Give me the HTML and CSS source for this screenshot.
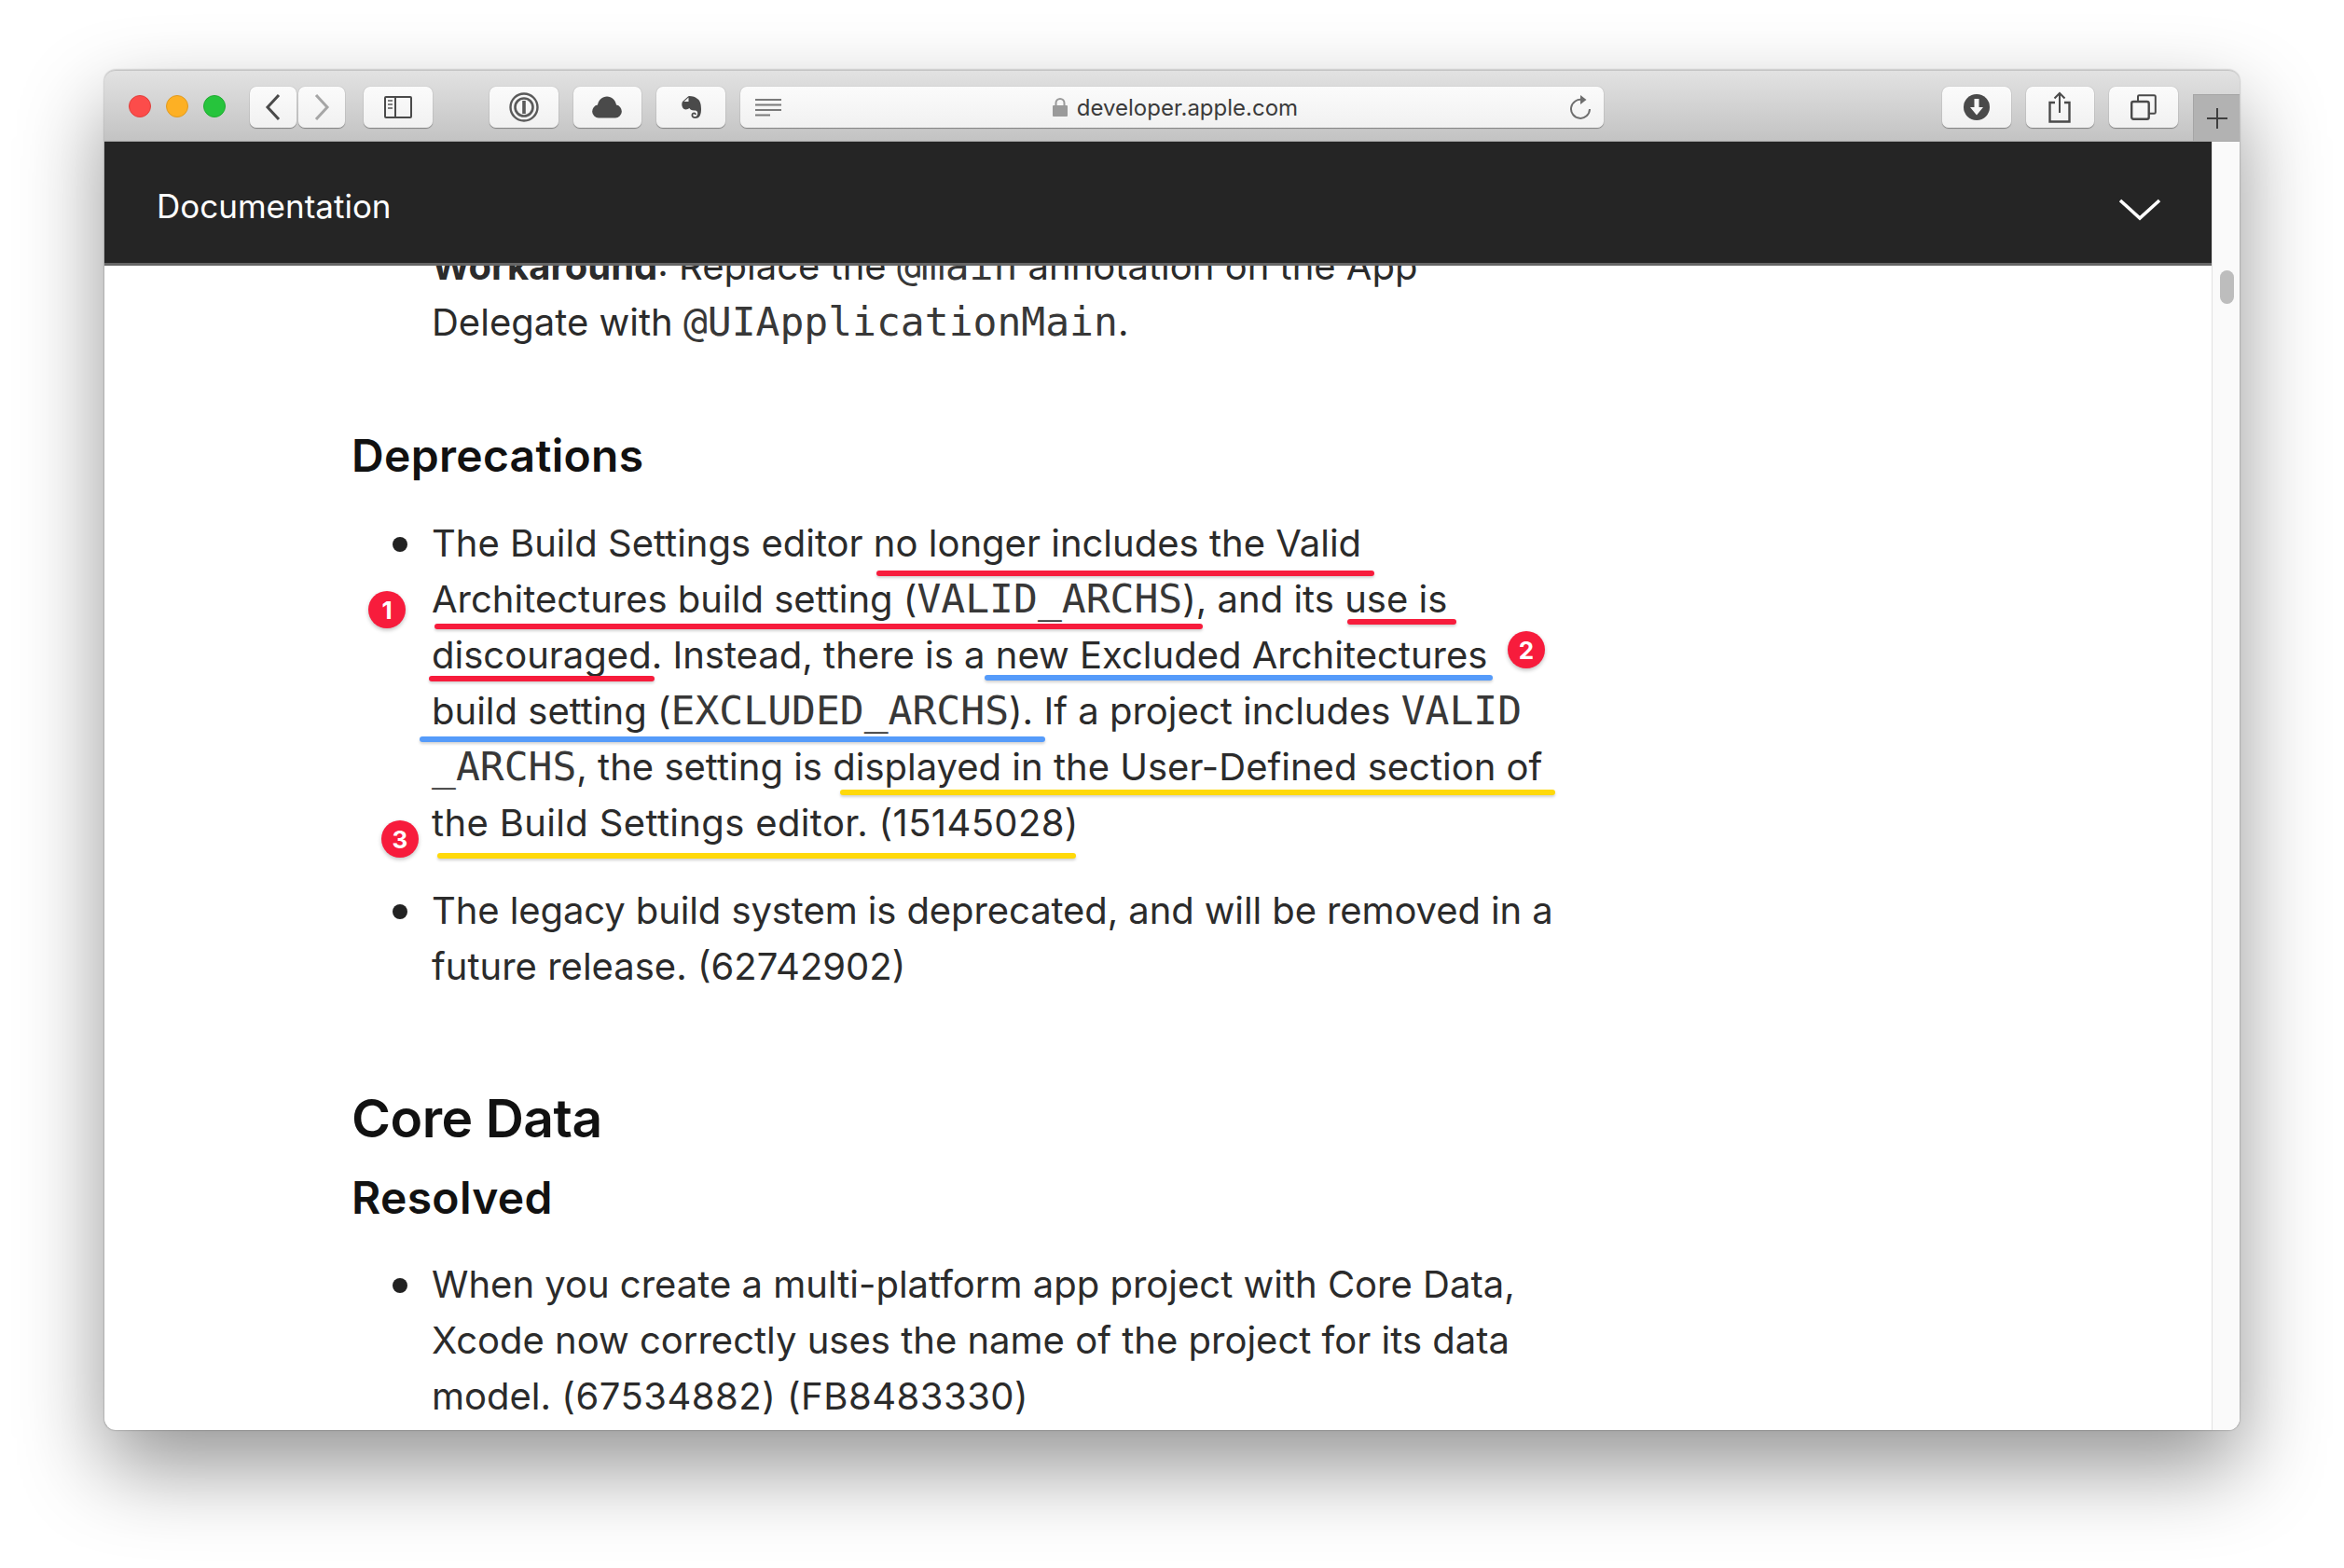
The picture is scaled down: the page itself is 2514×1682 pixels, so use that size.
FILE: index.html
```html
<!DOCTYPE html>
<html lang="en">
<head>
<meta charset="UTF-8">
<meta name="viewport" content="width=device-width, initial-scale=1.0">
<title>Documentation</title>
<link rel="stylesheet" href="styles.css">
</head>
<body>
<div class="window">
  <div class="toolbar">
    <div class="lights">
      <span class="light light-red"></span>
      <span class="light light-yellow"></span>
      <span class="light light-green"></span>
    </div>
    <div class="nav-pair">
      <button class="tool tool-nav"><svg width="22" height="32" viewBox="0 0 22 32"><path d="M17 3 5 16l12 13" fill="none" stroke="#4a4a4a" stroke-width="3"/></svg></button>
      <button class="tool tool-nav"><svg width="22" height="32" viewBox="0 0 22 32"><path d="M5 3l12 13L5 29" fill="none" stroke="#a6a6a6" stroke-width="3"/></svg></button>
    </div>
    <button class="tool tool-side"><svg width="30" height="24" viewBox="0 0 30 24"><rect x="1" y="1" width="28" height="22" rx="1" fill="none" stroke="#4a4a4a" stroke-width="2"/><path d="M12 1v22" stroke="#4a4a4a" stroke-width="2"/><path d="M4 5h5M4 9h5M4 13h5" stroke="#808080" stroke-width="2"/></svg></button>
    <button class="tool"><svg width="32" height="32" viewBox="0 0 32 32"><circle cx="16" cy="16" r="14.5" fill="none" stroke="#5a5a5a" stroke-width="2.4"/><circle cx="16" cy="16" r="9.5" fill="none" stroke="#5a5a5a" stroke-width="2.6"/><rect x="14.2" y="9" width="3.6" height="14" fill="#5a5a5a"/></svg></button>
    <button class="tool"><svg width="32" height="24" viewBox="0 0 32 24"><path d="M7 23.500a7 7 0 0 1-1-13.900C7 4 11 .5 16 .5s9 3.500 10 9.100a7 7 0 0 1-1 13.900z" fill="#4a4a4a"/></svg></button>
    <button class="tool"><svg width="21" height="24" viewBox="0 0 21 24"><path d="M8 0c4 0 7 1 9 3 3 2 4 6 4 11s-1 10-6.500 10c-2.500 0-4-1.500-4-3.500s1.500-3 3-3 2.300 1 2.300 2.500H14c0-.5-.2-.8-.7-.8-.7 0-1 .6-1 1.300 0 1 .9 1.700 2.200 1.700 2 0 2.800-2.200 2.700-4.200-.2-2-1.700-2.500-3.700-2.500-3 0-4.500-1-5-2.500-2.500 2-6 2-7.300-.5C0 10 0 8 1 6L7 .5z" fill="#4a4a4a"/><path d="M2.500 6l5-4.500V6z" fill="#f4f4f4"/></svg></button>
    <div class="address">
      <svg class="reader-icon" width="28" height="20" viewBox="0 0 28 20"><path d="M0 2h28M0 7.500h28M0 13h28M0 18.500h16" stroke="#7a7a7a" stroke-width="2"/></svg>
      <span class="address-host"><svg width="16" height="20" viewBox="0 0 16 20"><rect y="8" width="16" height="12" rx="1" fill="#9a9a9a"/><path d="M3.500 9V5.500a4.500 4.500 0 0 1 9 0V9" fill="none" stroke="#9a9a9a" stroke-width="2"/></svg>developer.apple.com</span>
      <svg class="reload-icon" width="24" height="26" viewBox="0 0 24 26"><path d="M14.500 5.200A10 10 0 1 0 22 15" fill="none" stroke="#6e6e6e" stroke-width="2"/><path d="M12 0l6.500 5L12 10z" fill="#6e6e6e"/></svg>
    </div>
    <button class="tool"><svg width="28" height="28" viewBox="0 0 28 28"><circle cx="14" cy="14" r="14" fill="#4a4a4a"/><path d="M11.500 5h5v9h4.500L14 22.500 7 14h4.500z" fill="#f6f6f6"/></svg></button>
    <button class="tool"><svg width="24" height="34" viewBox="0 0 24 34"><path d="M7 12H1.500v20.500h21V12H17" fill="none" stroke="#4a4a4a" stroke-width="2.400"/><path d="M12 23V2M6.500 7.500 12 2l5.500 5.500" fill="none" stroke="#4a4a4a" stroke-width="2"/></svg></button>
    <button class="tool"><svg width="28" height="28" viewBox="0 0 28 28"><rect x="1.200" y="8" width="18.500" height="18.800" rx="2" fill="none" stroke="#4a4a4a" stroke-width="2.400"/><path d="M8 7.500V2.500c0-.8.500-1.300 1.300-1.300h16c.8 0 1.500.5 1.500 1.300v17c0 .8-.7 1.300-1.500 1.300H20" fill="none" stroke="#4a4a4a" stroke-width="2"/></svg></button>
    <div class="new-tab"><svg width="24" height="24" viewBox="0 0 24 24"><path d="M12 1v22M1 12h22" stroke="#3f3f3f" stroke-width="2"/></svg></div>
  </div>

  <div class="page">
    <div class="page-main">
      <header class="doc-header">
        <span class="doc-title">Documentation</span>
        <svg class="doc-chevron" width="46" height="24" viewBox="0 0 46 24"><path d="M2 2l21 19L44 2" fill="none" stroke="#fff" stroke-width="3.600"/></svg>
      </header>
      <div class="content">
        <article class="article">
          <ul class="list list-top">
            <li class="no-bullet"><b>Workaround</b>: Replace the <code>@main</code> annotation on the App<br>Delegate with <code>@UIApplicationMain</code>.</li>
          </ul>
          <h3 class="h-sub">Deprecations</h3>
          <ul class="list">
            <li>The Build Settings editor no longer includes the Valid<br>Architectures build setting (<code>VALID_ARCHS</code>), and its use is<br>discouraged. Instead, there is a new Excluded Architectures<br>build setting (<code>EXCLUDED_ARCHS</code>). If a project includes <code>VALID</code><br><code>_ARCHS</code>, the setting is displayed in the User-Defined section of<br><span class="spread">the Build Settings editor. (15145028)</span></li>
            <li><span class="narrow">The legacy build system is deprecated, and will be removed in a</span><br>future release. (62742902)</li>
          </ul>
          <h2 class="h-main">Core Data</h2>
          <h3 class="h-sub h-sub-tight">Resolved</h3>
          <ul class="list">
            <li>When you create a multi-platform app project with Core Data,<br>Xcode now correctly uses the name of the project for its data<br>model. <span class="spread-more">(67534882) (FB8483330)</span></li>
          </ul>
        </article>
      </div>
    </div>
    <div class="scroller"><div class="scroller-thumb"></div></div>
  </div>

  <!-- hand drawn annotations on top of the page -->
  <span class="mark mark-red mark-r1"></span>
  <span class="mark mark-red mark-r2"></span>
  <span class="mark mark-red mark-r3"></span>
  <span class="mark mark-red mark-r4"></span>
  <span class="mark mark-blue mark-b1"></span>
  <span class="mark mark-blue mark-b2"></span>
  <span class="mark mark-yellow mark-y1"></span>
  <span class="mark mark-yellow mark-y2"></span>
  <span class="badge badge-1">1</span>
  <span class="badge badge-2">2</span>
  <span class="badge badge-3">3</span>
</div>
</body>
</html>
```

FILE: styles.css
```css
* {
    box-sizing: border-box;
}

body {
    margin: 0;
    padding: 75px 112px 0;
    height: 1682px;
    overflow: hidden;
    background: #fff;
    font-family: Inter, "Liberation Sans", sans-serif;
}

.window {
    position: relative;
    width: 2290px;
    height: 1459px;
    border-radius: 12px;
    display: flex;
    flex-direction: column;
    background: #fff;
    box-shadow: 0 40px 90px rgba(0, 0, 0, 0.42), 0 0 2px rgba(0, 0, 0, 0.45);
}

/* toolbar */
.toolbar {
    height: 77px;
    flex-shrink: 0;
    display: flex;
    align-items: flex-start;
    padding: 17px 0 0 26px;
    border-radius: 12px 12px 0 0;
    border-top: 1px solid #c4c4c4;
    border-bottom: 1px solid #a8a8a8;
    background: linear-gradient(#e2e2e2, #c3c3c3);
}

.lights {
    display: flex;
    gap: 16px;
    margin-top: 9px;
    margin-right: 26px;
}

.light {
    width: 24px;
    height: 24px;
    border-radius: 50%;
}

.light-red {
    background: #fc4c4a;
    border: 1px solid #e0403c;
}

.light-yellow {
    background: #fdb024;
    border: 1px solid #e09a20;
}

.light-green {
    background: #26c43c;
    border: 1px solid #1fab30;
}

.tool {
    width: 74px;
    height: 44px;
    padding: 0;
    border: none;
    border-radius: 7px;
    display: flex;
    align-items: center;
    justify-content: center;
    background: linear-gradient(#fbfbfb, #f1f1f1);
    box-shadow: 0 1px 1px rgba(0, 0, 0, 0.35), 0 0 1px rgba(0, 0, 0, 0.3);
    margin-right: 16px;
}

.nav-pair {
    display: flex;
    gap: 2px;
    margin-right: 20px;
}

.tool-nav {
    width: 50px;
    margin-right: 0;
}

.tool-side {
    margin-right: 61px;
}

.address {
    width: 928px;
    height: 44px;
    margin-right: 363px;
    padding: 0 13px 0 16px;
    border-radius: 7px;
    display: flex;
    align-items: center;
    justify-content: space-between;
    background: linear-gradient(#fbfbfb, #f1f1f1);
    box-shadow: 0 1px 1px rgba(0, 0, 0, 0.35), 0 0 1px rgba(0, 0, 0, 0.3);
}

.address-host {
    display: flex;
    align-items: center;
    gap: 10px;
    font-size: 24px;
    color: #3b3b3b;
}

.new-tab {
    width: 50px;
    height: 50px;
    margin-top: 8px;
    display: flex;
    align-items: center;
    justify-content: center;
    background: #b2b2b2;
    border-top: 1px solid #a5a5a5;
    border-left: 1px solid #a5a5a5;
}

/* page */
.page {
    flex: 1;
    min-height: 0;
    display: flex;
    border-radius: 0 0 12px 12px;
    overflow: hidden;
}

.page-main {
    flex: 1;
    min-width: 0;
    display: flex;
    flex-direction: column;
}

.doc-header {
    height: 133px;
    flex-shrink: 0;
    display: flex;
    align-items: center;
    justify-content: space-between;
    padding: 8px 54px 0 56px;
    background: #252525;
    border-bottom: 3px solid #666;
}

.doc-title {
    font-size: 35px;
    color: #fff;
}

.doc-chevron {
    margin-top: 7px;
}

.content {
    flex: 1;
    min-height: 0;
    overflow: hidden;
}

.article {
    margin-top: -29px;
    padding-left: 265px;
    font-size: 40px;
    line-height: 60px;
    color: #2b2b2b;
}

.article code {
    font-family: "DejaVu Sans Mono", monospace;
    font-size: 43px;
    line-height: 1;
    color: #383838;
}

.spread {
    letter-spacing: 0.35px;
}

.spread-more {
    letter-spacing: 0.5px;
}

.narrow {
    letter-spacing: -0.1px;
}

.list {
    list-style: none;
    margin: 0;
    padding: 0 0 0 86px;
}

.list li {
    position: relative;
    margin-bottom: 34px;
}

.list li::before {
    content: "";
    position: absolute;
    left: -42px;
    top: 23px;
    width: 16px;
    height: 16px;
    border-radius: 50%;
    background: #222;
}

.list .no-bullet::before {
    display: none;
}

.h-sub {
    margin: 83px 0 34px;
    font-size: 48px;
    line-height: 60px;
    font-weight: 600;
    letter-spacing: 0.3px;
    color: #111;
}

.h-sub-tight {
    margin-top: 0;
    margin-bottom: 33px;
}

.h-main {
    margin: 98px 0 20px;
    font-size: 57px;
    line-height: 70px;
    font-weight: 600;
    letter-spacing: -0.5px;
    color: #111;
}

.scroller {
    width: 30px;
    flex-shrink: 0;
    padding: 138px 6px 0 8px;
    background: #fafafa;
    border-left: 1px solid #e2e2e2;
}

.scroller-thumb {
    height: 36px;
    border-radius: 8px;
    background: #bdbdbd;
}

/* annotations */
.mark {
    position: absolute;
    height: 6px;
    border-radius: 3px;
    box-shadow: 0 2px 3px rgba(0, 0, 0, 0.18);
}

.mark-red {
    background: #f71c3c;
}

.mark-blue {
    background: #559bfa;
}

.mark-yellow {
    background: #ffd90a;
}

.mark-r1 { left: 828px; top: 537px; width: 534px; }
.mark-r2 { left: 354px; top: 594px; width: 824px; }
.mark-r3 { left: 1333px; top: 589px; width: 117px; }
.mark-r4 { left: 348px; top: 650px; width: 242px; }
.mark-b1 { left: 944px; top: 649px; width: 545px; }
.mark-b2 { left: 338px; top: 715px; width: 671px; }
.mark-y1 { left: 789px; top: 772px; width: 767px; }
.mark-y2 { left: 357px; top: 840px; width: 685px; }

.badge {
    position: absolute;
    width: 40px;
    height: 40px;
    border-radius: 50%;
    display: flex;
    align-items: center;
    justify-content: center;
    background: #f71c3c;
    color: #fff;
    font-size: 26px;
    font-weight: 700;
    box-shadow: 0 2px 4px rgba(0, 0, 0, 0.25);
}

.badge-1 { left: 283px; top: 559px; }
.badge-2 { left: 1505px; top: 602px; }
.badge-3 { left: 297px; top: 805px; }
```
